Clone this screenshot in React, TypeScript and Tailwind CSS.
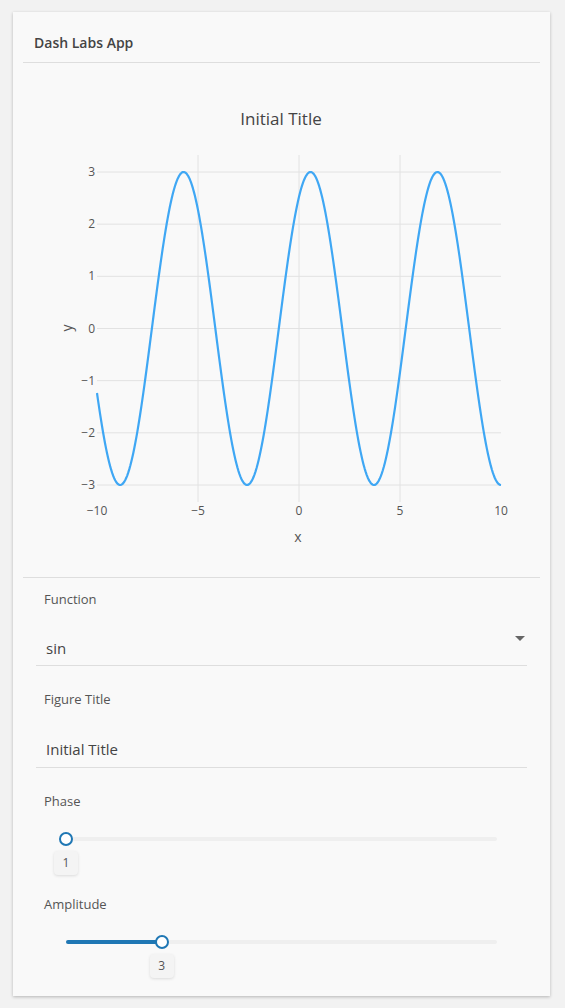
import React from 'react';

const font = { fontFamily: '"Open Sans", "Liberation Sans", sans-serif' };

// plot geometry, in svg coordinates (svg sits at x=23, y=64 of the page)
const X0 = 74;
const X1 = 478;
const PLOT_TOP = 92;
const PLOT_BOTTOM = 439;
const sx = (x: number) => X0 + ((x + 10) / 20) * (X1 - X0);
const sy = (y: number) => 109 + (3 - y) * ((422 - 109) / 6);

function curvePath(phase: number, amp: number) {
  const pts: string[] = [];
  for (let i = 0; i <= 400; i++) {
    const x = -10 + (20 * i) / 400;
    const y = amp * Math.sin(x + phase);
    pts.push(`${i === 0 ? 'M' : 'L'}${sx(x).toFixed(2)},${sy(y).toFixed(2)}`);
  }
  return pts.join(' ');
}

function Chart() {
  const yTicks = [3, 2, 1, 0, -1, -2, -3];
  const xTicks = [-10, -5, 0, 5, 10];
  return (
    <svg width="516" height="514" viewBox="0 0 516 514" className="block" style={font}>
      <text x="258" y="62" textAnchor="middle" fontSize="17" fill="#444">
        Initial Title
      </text>
      {xTicks
        .filter((t) => t !== -10 && t !== 10)
        .map((t) => (
          <line key={t} x1={sx(t)} x2={sx(t)} y1={PLOT_TOP} y2={PLOT_BOTTOM} stroke="#e2e2e2" strokeWidth="1" />
        ))}
      {yTicks.map((t) => (
        <line key={t} x1={X0} x2={X1} y1={sy(t)} y2={sy(t)} stroke="#e2e2e2" strokeWidth="1" />
      ))}
      <path d={curvePath(1, 3)} fill="none" stroke="#3fa7f4" strokeWidth="2.2" strokeLinejoin="round" />
      {yTicks.map((t) => (
        <text key={t} x="72" y={sy(t) + 4} textAnchor="end" fontSize="12" fill="#555">
          {t < 0 ? `\u2212${-t}` : t}
        </text>
      ))}
      {xTicks.map((t) => (
        <text key={t} x={sx(t)} y="452" textAnchor="middle" fontSize="12" fill="#555">
          {t < 0 ? `\u2212${-t}` : t}
        </text>
      ))}
      <text x="275" y="479" textAnchor="middle" fontSize="14" fill="#555">
        x
      </text>
      <text x="49" y="265" textAnchor="middle" fontSize="14" fill="#555" transform="rotate(-90 49 265)">
        y
      </text>
    </svg>
  );
}

function Slider({ value, min, max, filled }: { value: number; min: number; max: number; filled?: boolean }) {
  const pct = ((value - min) / (max - min)) * 100;
  return (
    <div className="relative mx-[43px] h-full">
      <div className="absolute left-0 right-0 top-[27px] h-[4px] rounded-full bg-[#efefef]" />
      {filled && (
        <div className="absolute left-0 top-[27px] h-[4px] rounded-full bg-[#1f77b4]" style={{ width: `${pct}%` }} />
      )}
      <div
        className="absolute top-[22px] h-[14px] w-[14px] -translate-x-1/2 rounded-full border-2 border-[#1f77b4] bg-white"
        style={{ left: `${pct}%` }}
      />
      <div
        className="absolute top-[41px] flex h-[24px] w-[24px] -translate-x-1/2 items-center justify-center rounded-[4px] bg-[#f4f4f4] text-[12px] text-[#555] shadow-[0_1px_3px_rgba(0,0,0,0.12)]"
        style={{ left: `${pct}%` }}
      >
        {value}
      </div>
    </div>
  );
}

export default function App() {
  return (
    <div className="min-h-screen bg-[#f2f2f2] pt-[12px] pl-[13px]" style={font}>
      <div className="w-[537px] bg-[#f9f9f9] px-[10px] shadow-[0_1px_3px_rgba(0,0,0,0.25)]">
        <div className="h-[51px] border-b border-[#dedede] pl-[11px] pt-[22px] text-[14px] leading-[18px] font-semibold text-[#444]">
          Dash Labs App
        </div>

        <div className="border-b border-[#dedede]">
          <Chart />
        </div>

        <div className="pl-[21px] pt-[12px] text-[13px] leading-[18px] text-[#555]">Function</div>
        <div className="mx-[13px] flex justify-between border-b border-[#dedede] pl-[10px] pr-[1px] pt-[30px] pb-[7px]">
          <span className="text-[15px] leading-[20px] text-[#444]">sin</span>
          <svg width="12" height="7" viewBox="0 0 12 7" className="-mt-[3px]">
            <path d="M1 1 L11 1 L6 6 Z" fill="#666" />
          </svg>
        </div>

        <div className="pl-[21px] pt-[24px] text-[13px] leading-[18px] text-[#555]">Figure Title</div>
        <div className="mx-[13px] border-b border-[#dedede] pl-[10px] pt-[31px] pb-[8px] text-[15px] leading-[20px] text-[#444]">
          Initial Title
        </div>

        <div className="pl-[21px] pt-[24px] text-[13px] leading-[18px] text-[#555]">Phase</div>
        <div className="h-[85px]">
          <Slider value={1} min={1} max={10} />
        </div>

        <div className="pl-[21px] text-[13px] leading-[18px] text-[#555]">Amplitude</div>
        <div className="h-[83px]">
          <Slider value={3} min={1} max={10} filled />
        </div>
      </div>
    </div>
  );
}
